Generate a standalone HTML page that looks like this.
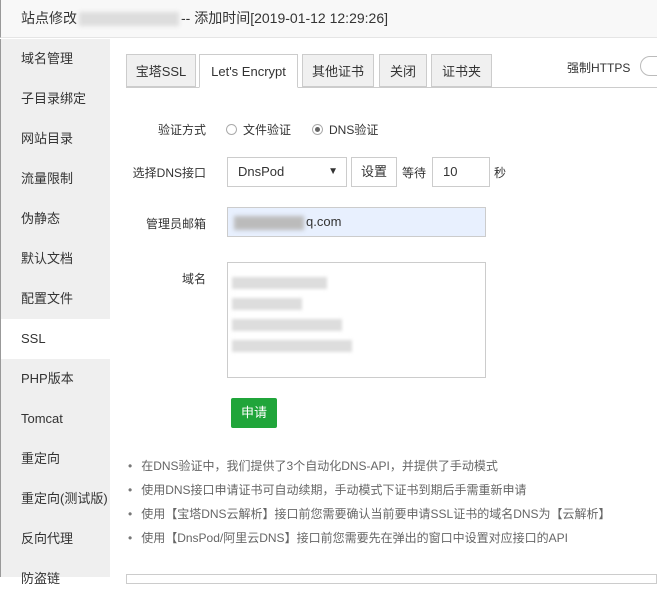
<!DOCTYPE html>
<html><head><meta charset="utf-8"><style>
*{margin:0;padding:0;box-sizing:border-box}
body{width:657px;height:577px;overflow:hidden;background:#fff;font-family:"Liberation Sans","Noto Sans CJK SC",sans-serif;font-size:12px;color:#333;position:relative}
.hdr{position:absolute;left:0;top:0;width:657px;height:38px;background:#f8f8f8;border-bottom:1px solid #e5e5e5;border-left:1px solid #999;font-size:14px;line-height:36px;padding-left:20px;color:#333}
.blur{display:inline-block;width:100px;height:14px;background:#ddd;vertical-align:middle;margin:0 2px;filter:blur(2px)}
.side{position:absolute;left:0;top:39px;width:110px;height:538px;background:#efefef;border-left:1px solid #999}
.side div{height:40px;line-height:40px;padding-left:20px;font-size:13px;color:#333}
.side .act{background:#fff}
.abs{position:absolute}
.tab{position:absolute;top:54px;height:33px;border:1px solid #ccc;background:#f0f0f0;line-height:33px;text-align:center;font-size:13px}
.tab.a{background:#fff;border-bottom-color:#fff;height:34px}
.lbl{position:absolute;text-align:right;width:100px;left:106px;font-size:12px}
.inp{position:absolute;border:1px solid #ccc;height:30px;line-height:28px;padding-left:10px;font-size:13px;background:#fff}
.radio{display:inline-block;width:11px;height:11px;border:1px solid #aaa;border-radius:50%;vertical-align:-1px;margin-right:6px;position:relative}
ul{position:absolute;left:128px;top:456px;list-style:none;color:#666;font-size:12px}
ul li{height:24px;line-height:20px}
ul li:before{content:"•";color:#777;margin-right:9px}
.g{display:block;background:#ddd;height:12px;filter:blur(1.5px);margin:9px 0 0 4px}
</style></head><body>
<div class="hdr">站点修改<span class="blur"></span>-- 添加时间[2019-01-12 12:29:26]</div>
<div class="side">
<div>域名管理</div><div>子目录绑定</div><div>网站目录</div><div>流量限制</div><div>伪静态</div><div>默认文档</div><div>配置文件</div><div class="act">SSL</div><div>PHP版本</div><div>Tomcat</div><div>重定向</div><div>重定向(测试版)</div><div>反向代理</div><div>防盗链</div>
</div>
<div class="abs" style="left:126px;top:87px;width:531px;border-top:1px solid #ccc"></div>
<div class="tab" style="left:126px;width:70px">宝塔SSL</div>
<div class="tab a" style="left:199px;width:99px">Let's Encrypt</div>
<div class="tab" style="left:302px;width:72px">其他证书</div>
<div class="tab" style="left:379px;width:48px">关闭</div>
<div class="tab" style="left:431px;width:61px">证书夹</div>
<div class="abs" style="left:567px;top:59px;font-size:12px">强制HTTPS</div>
<div class="abs" style="left:640px;top:56px;width:30px;height:20px;border:1px solid #bbb;border-radius:10px"></div>
<div class="lbl" style="top:121px">验证方式</div>
<div class="abs" style="left:226px;top:121px"><span class="radio"></span>文件验证</div>
<div class="abs" style="left:312px;top:121px"><span class="radio"><span style="position:absolute;left:2px;top:2px;width:5px;height:5px;border-radius:50%;background:#666"></span></span>DNS验证</div>
<div class="lbl" style="top:164px">选择DNS接口</div>
<div class="inp" style="left:227px;top:157px;width:120px">DnsPod<span style="position:absolute;right:8px;font-size:10px">▼</span></div>
<div class="inp" style="left:351px;top:157px;width:46px;padding-left:0;text-align:center">设置</div>
<div class="abs" style="left:402px;top:164px">等待</div>
<div class="inp" style="left:432px;top:157px;width:58px">10</div>
<div class="abs" style="left:494px;top:164px">秒</div>
<div class="lbl" style="top:215px">管理员邮箱</div>
<div class="inp" style="left:227px;top:207px;width:259px;background:#e8f0fe;border-color:#ccc"><span class="blur" style="width:70px;background:#bbb;margin-left:-4px"></span>q.com</div>
<div class="lbl" style="top:270px">域名</div>
<div class="inp" style="left:227px;top:262px;width:259px;height:116px;padding:0">
<span class="g" style="width:95px;margin-top:14px"></span><span class="g" style="width:70px"></span><span class="g" style="width:110px"></span><span class="g" style="width:120px"></span></div>
<div class="abs" style="left:231px;top:398px;width:46px;height:30px;background:#20a53a;border-radius:2px;color:#fff;text-align:center;line-height:30px;font-size:13px">申请</div>
<ul>
<li>在DNS验证中，我们提供了3个自动化DNS-API，并提供了手动模式</li>
<li>使用DNS接口申请证书可自动续期，手动模式下证书到期后手需重新申请</li>
<li>使用【宝塔DNS云解析】接口前您需要确认当前要申请SSL证书的域名DNS为【云解析】</li>
<li>使用【DnsPod/阿里云DNS】接口前您需要先在弹出的窗口中设置对应接口的API</li>
</ul>
<div class="abs" style="left:126px;top:574px;width:531px;height:10px;border:1px solid #ccc"></div>
</body></html>
